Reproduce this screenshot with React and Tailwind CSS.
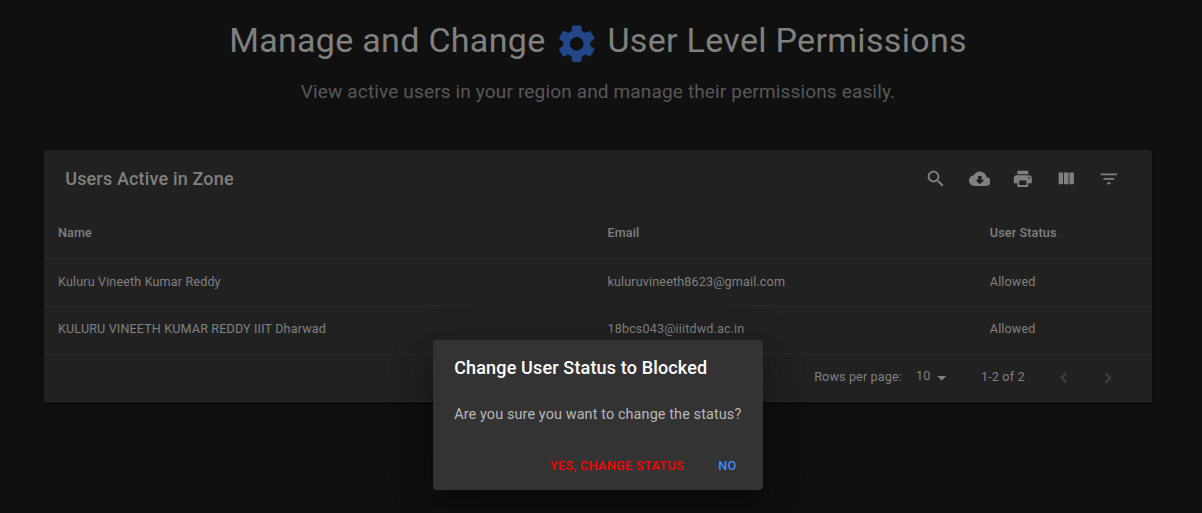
import React from "react";

const icons = {
  settings:
    "M19.14 12.94c.04-.3.06-.61.06-.94 0-.32-.02-.64-.07-.94l2.03-1.58c.18-.14.23-.41.12-.61l-1.92-3.32c-.12-.22-.37-.29-.59-.22l-2.39.96c-.5-.38-1.03-.7-1.62-.94l-.36-2.54c-.04-.24-.24-.41-.48-.41h-3.84c-.24 0-.43.17-.47.41l-.36 2.54c-.59.24-1.13.57-1.62.94l-2.39-.96c-.22-.08-.47 0-.59.22L2.74 8.87c-.12.21-.08.47.12.61l2.03 1.58c-.05.3-.09.63-.09.94s.02.64.07.94l-2.03 1.58c-.18.14-.23.41-.12.61l1.92 3.32c.12.22.37.29.59.22l2.39-.96c.5.38 1.03.7 1.62.94l.36 2.54c.05.24.24.41.48.41h3.84c.24 0 .44-.17.47-.41l.36-2.54c.59-.24 1.13-.56 1.62-.94l2.39.96c.22.08.47 0 .59-.22l1.92-3.32c.12-.22.07-.47-.12-.61l-2.01-1.58zM12 15.6c-1.98 0-3.6-1.62-3.6-3.6s1.62-3.6 3.6-3.6 3.6 1.62 3.6 3.6-1.62 3.6-3.6 3.6z",
  search:
    "M15.5 14h-.79l-.28-.27C15.41 12.59 16 11.11 16 9.5 16 5.91 13.09 3 9.5 3S3 5.91 3 9.5 5.91 16 9.5 16c1.61 0 3.09-.59 4.23-1.57l.27.28v.79l5 4.99L20.49 19l-4.99-5zm-6 0C7.01 14 5 11.99 5 9.5S7.01 5 9.5 5 14 7.01 14 9.5 11.99 14 9.5 14z",
  download:
    "M19.35 10.04C18.67 6.59 15.64 4 12 4 9.11 4 6.6 5.64 5.35 8.04 2.34 8.36 0 10.91 0 14c0 3.31 2.69 6 6 6h13c2.76 0 5-2.24 5-5 0-2.64-2.05-4.78-4.65-4.96zM17 13l-5 5-5-5h3V9h4v4h3z",
  print:
    "M19 8H5c-1.66 0-3 1.34-3 3v6h4v4h12v-4h4v-6c0-1.66-1.34-3-3-3zm-3 11H8v-5h8v5zm3-7c-.55 0-1-.45-1-1s.45-1 1-1 1 .45 1 1-.45 1-1 1zm-1-9H6v4h12V3z",
  columns: "M10 18h5V5h-5v13zm-6 0h5V5H4v13zM16 5v13h5V5h-5z",
  filter: "M10 18h4v-2h-4v2zM3 6v2h18V6H3zm3 7h12v-2H6v2z",
  dropdown: "M7 10l5 5 5-5z",
  left: "M15.41 16.59L10.83 12l4.58-4.59L14 6l-6 6 6 6 1.41-1.41z",
  right: "M8.59 16.59L13.17 12 8.59 7.41 10 6l6 6-6 6-1.41-1.41z",
};

function Icon({ name, className = "size-[21.6px]" }) {
  return (
    <svg viewBox="0 0 24 24" fill="currentColor" className={className}>
      <path d={icons[name]} />
    </svg>
  );
}

const users = [
  { name: "Kuluru Vineeth Kumar Reddy", email: "kuluruvineeth8623@gmail.com", status: "Allowed", pad: "pt-px" },
  { name: "KULURU VINEETH KUMAR REDDY IIIT Dharwad", email: "18bcs043@iiitdwd.ac.in", status: "Allowed", pad: "" },
];

const row = "grid grid-cols-[549.5px_382.3px_1fr] items-center border-b border-[#292929] px-3.5";

export default function App() {
  return (
    <div className="h-[513px] overflow-hidden bg-[#101010] font-['Roboto',sans-serif] text-[12.6px] tracking-[0.01071em] text-[#808080]">
      <header className="flex w-[1196px] flex-col items-center">
        <h1 className="flex h-[81px] items-center pb-0.5 text-[34px] leading-[42px] tracking-[0.009em]">
          Manage and Change
          <Icon name="settings" className="mt-[8px] mr-[8px] ml-[8.5px] size-[45.5px] text-[#23458a]" />
          User Level Permissions
        </h1>
        <p className="text-[19px] leading-[22px] tracking-[0.008em] text-[#585858]">
          View active users in your region and manage their permissions easily.
        </p>
      </header>

      <section className="mt-[47px] ml-11 w-[1108px] rounded-t-[4px] bg-[#212121] shadow-[0_2px_4px_rgba(0,0,0,0.4)]">
        <div className="flex h-[58px] items-center justify-between pr-[21.4px] pl-[21.2px]">
          <h2 className="pb-0.5 text-[18px] font-medium tracking-[0.009em]">Users Active in Zone</h2>
          <div className="flex">
            {["search", "download", "print", "columns", "filter"].map((name) => (
              <button key={name} className="flex size-[43.2px] items-center justify-center">
                <Icon name={name} />
              </button>
            ))}
          </div>
        </div>
        <div className={`${row} h-[50px] pt-0.5 font-medium`}>
          <span>Name</span>
          <span>Email</span>
          <span>User Status</span>
        </div>
        {users.map((user) => (
          <div key={user.email} className={`${row} h-12 ${user.pad}`}>
            <span>{user.name}</span>
            <span>{user.email}</span>
            <span>{user.status}</span>
          </div>
        ))}
        <div className="flex h-12 items-center justify-end border-b border-[#292929] pr-[23px]">
          <span>Rows per page:</span>
          <span className="-mt-0.5 ml-3.5">10</span>
          <Icon name="dropdown" className="ml-px size-[21.6px]" />
          <span className="ml-7">1-2 of 2</span>
          <button className="ml-[18px] flex size-[43.2px] items-center justify-center text-[#444444]">
            <Icon name="left" />
          </button>
          <button className="flex size-[43.2px] items-center justify-center text-[#444444]">
            <Icon name="right" />
          </button>
        </div>
      </section>

      <div
        role="dialog"
        className="absolute top-[340px] left-[433px] flex h-[150px] w-[330px] flex-col rounded-[4px] bg-[#333333] shadow-[0_10px_14px_-6px_rgba(0,0,0,0.2),0_22px_34px_3px_rgba(0,0,0,0.14),0_8px_41px_7px_rgba(0,0,0,0.12)]"
      >
        <h2 className="px-[21.2px] pt-[14px] text-[18px] leading-[28.8px] font-medium tracking-[0.0085em] text-white">
          Change User Status to Blocked
        </h2>
        <p className="mt-[21px] px-[21.2px] text-[14.4px] leading-[21.6px] tracking-[0.0085em] whitespace-nowrap text-[#b8b8b8]">
          Are you sure you want to change the status?
        </p>
        <div className="mt-auto flex h-[48px] items-center justify-end gap-2 pr-[7px] font-medium tracking-[0.02857em]">
          <button className="px-[7px] text-[#ff0000]">YES, CHANGE STATUS</button>
          <button className="w-[57px] text-[#448aff]">NO</button>
        </div>
      </div>
    </div>
  );
}
